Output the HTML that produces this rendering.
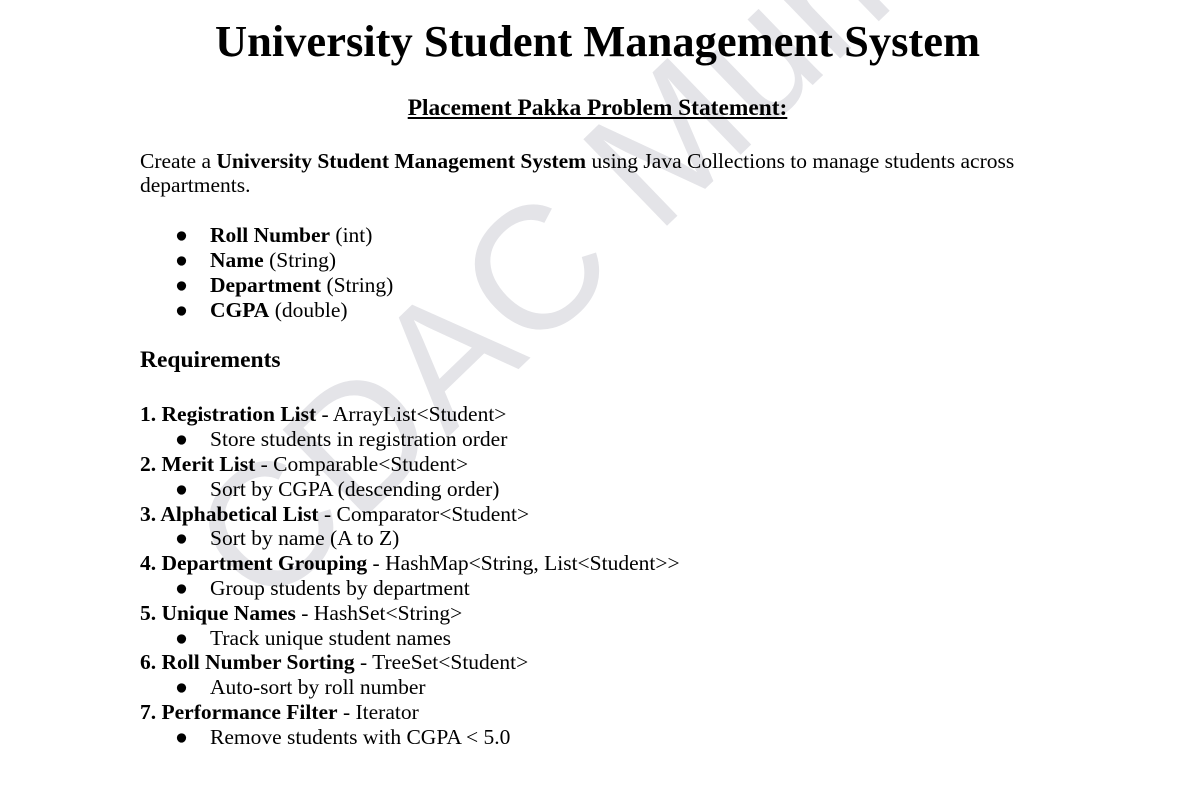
<!DOCTYPE html>
<html><head><style>
body{margin:0;width:1195px;height:785px;background:#fff;overflow:hidden;position:relative;font-family:"Liberation Serif",serif;color:#000}
svg.wm{position:absolute;left:0;top:0}
.a{position:absolute;white-space:nowrap;line-height:1}
h1{position:absolute;top:18px;left:0;width:1195px;text-align:center;margin:0;font-size:44.5px;line-height:46px}
.sub{position:absolute;top:95px;left:0;width:1195px;text-align:center;font-weight:bold;font-size:23.4px;text-decoration:underline}
.t{font-size:21.5px}
</style></head><body>
<svg class="wm" width="1195" height="785"><text transform="translate(265,614) rotate(-44)" font-family="Liberation Sans, sans-serif" font-size="175" fill="#e4e4e8">CDAC Mumbai</text></svg>
<h1>University Student Management System</h1>
<div class="sub">Placement Pakka Problem Statement:</div>
<div class="a t" style="left:140px;top:151px">Create a <b>University Student Management System</b> using Java Collections to manage students across</div>
<div class="a t" style="left:140px;top:175px">departments.</div>

<div class="a t" style="left:175px;top:225px">●</div><div class="a t" style="left:210px;top:225px"><b>Roll Number</b> (int)</div>
<div class="a t" style="left:175px;top:250px">●</div><div class="a t" style="left:210px;top:250px"><b>Name</b> (String)</div>
<div class="a t" style="left:175px;top:275px">●</div><div class="a t" style="left:210px;top:275px"><b>Department</b> (String)</div>
<div class="a t" style="left:175px;top:300px">●</div><div class="a t" style="left:210px;top:300px"><b>CGPA</b> (double)</div>

<div class="a" style="left:140px;top:349px;font-size:23.5px;font-weight:bold">Requirements</div>

<div class="a t" style="left:140px;top:404px"><b>1. Registration List</b> - ArrayList&lt;Student&gt;</div>
<div class="a t" style="left:175px;top:429px">●</div><div class="a t" style="left:210px;top:429px">Store students in registration order</div>
<div class="a t" style="left:140px;top:454px"><b>2. Merit List</b> - Comparable&lt;Student&gt;</div>
<div class="a t" style="left:175px;top:479px">●</div><div class="a t" style="left:210px;top:479px">Sort by CGPA (descending order)</div>
<div class="a t" style="left:140px;top:504px"><b>3. Alphabetical List</b> - Comparator&lt;Student&gt;</div>
<div class="a t" style="left:175px;top:528px">●</div><div class="a t" style="left:210px;top:528px">Sort by name (A to Z)</div>
<div class="a t" style="left:140px;top:553px"><b>4. Department Grouping</b> - HashMap&lt;String, List&lt;Student&gt;&gt;</div>
<div class="a t" style="left:175px;top:578px">●</div><div class="a t" style="left:210px;top:578px">Group students by department</div>
<div class="a t" style="left:140px;top:603px"><b>5. Unique Names</b> - HashSet&lt;String&gt;</div>
<div class="a t" style="left:175px;top:628px">●</div><div class="a t" style="left:210px;top:628px">Track unique student names</div>
<div class="a t" style="left:140px;top:652px"><b>6. Roll Number Sorting</b> - TreeSet&lt;Student&gt;</div>
<div class="a t" style="left:175px;top:677px">●</div><div class="a t" style="left:210px;top:677px">Auto-sort by roll number</div>
<div class="a t" style="left:140px;top:702px"><b>7. Performance Filter</b> - Iterator</div>
<div class="a t" style="left:175px;top:727px">●</div><div class="a t" style="left:210px;top:727px">Remove students with CGPA &lt; 5.0</div>
</body></html>
